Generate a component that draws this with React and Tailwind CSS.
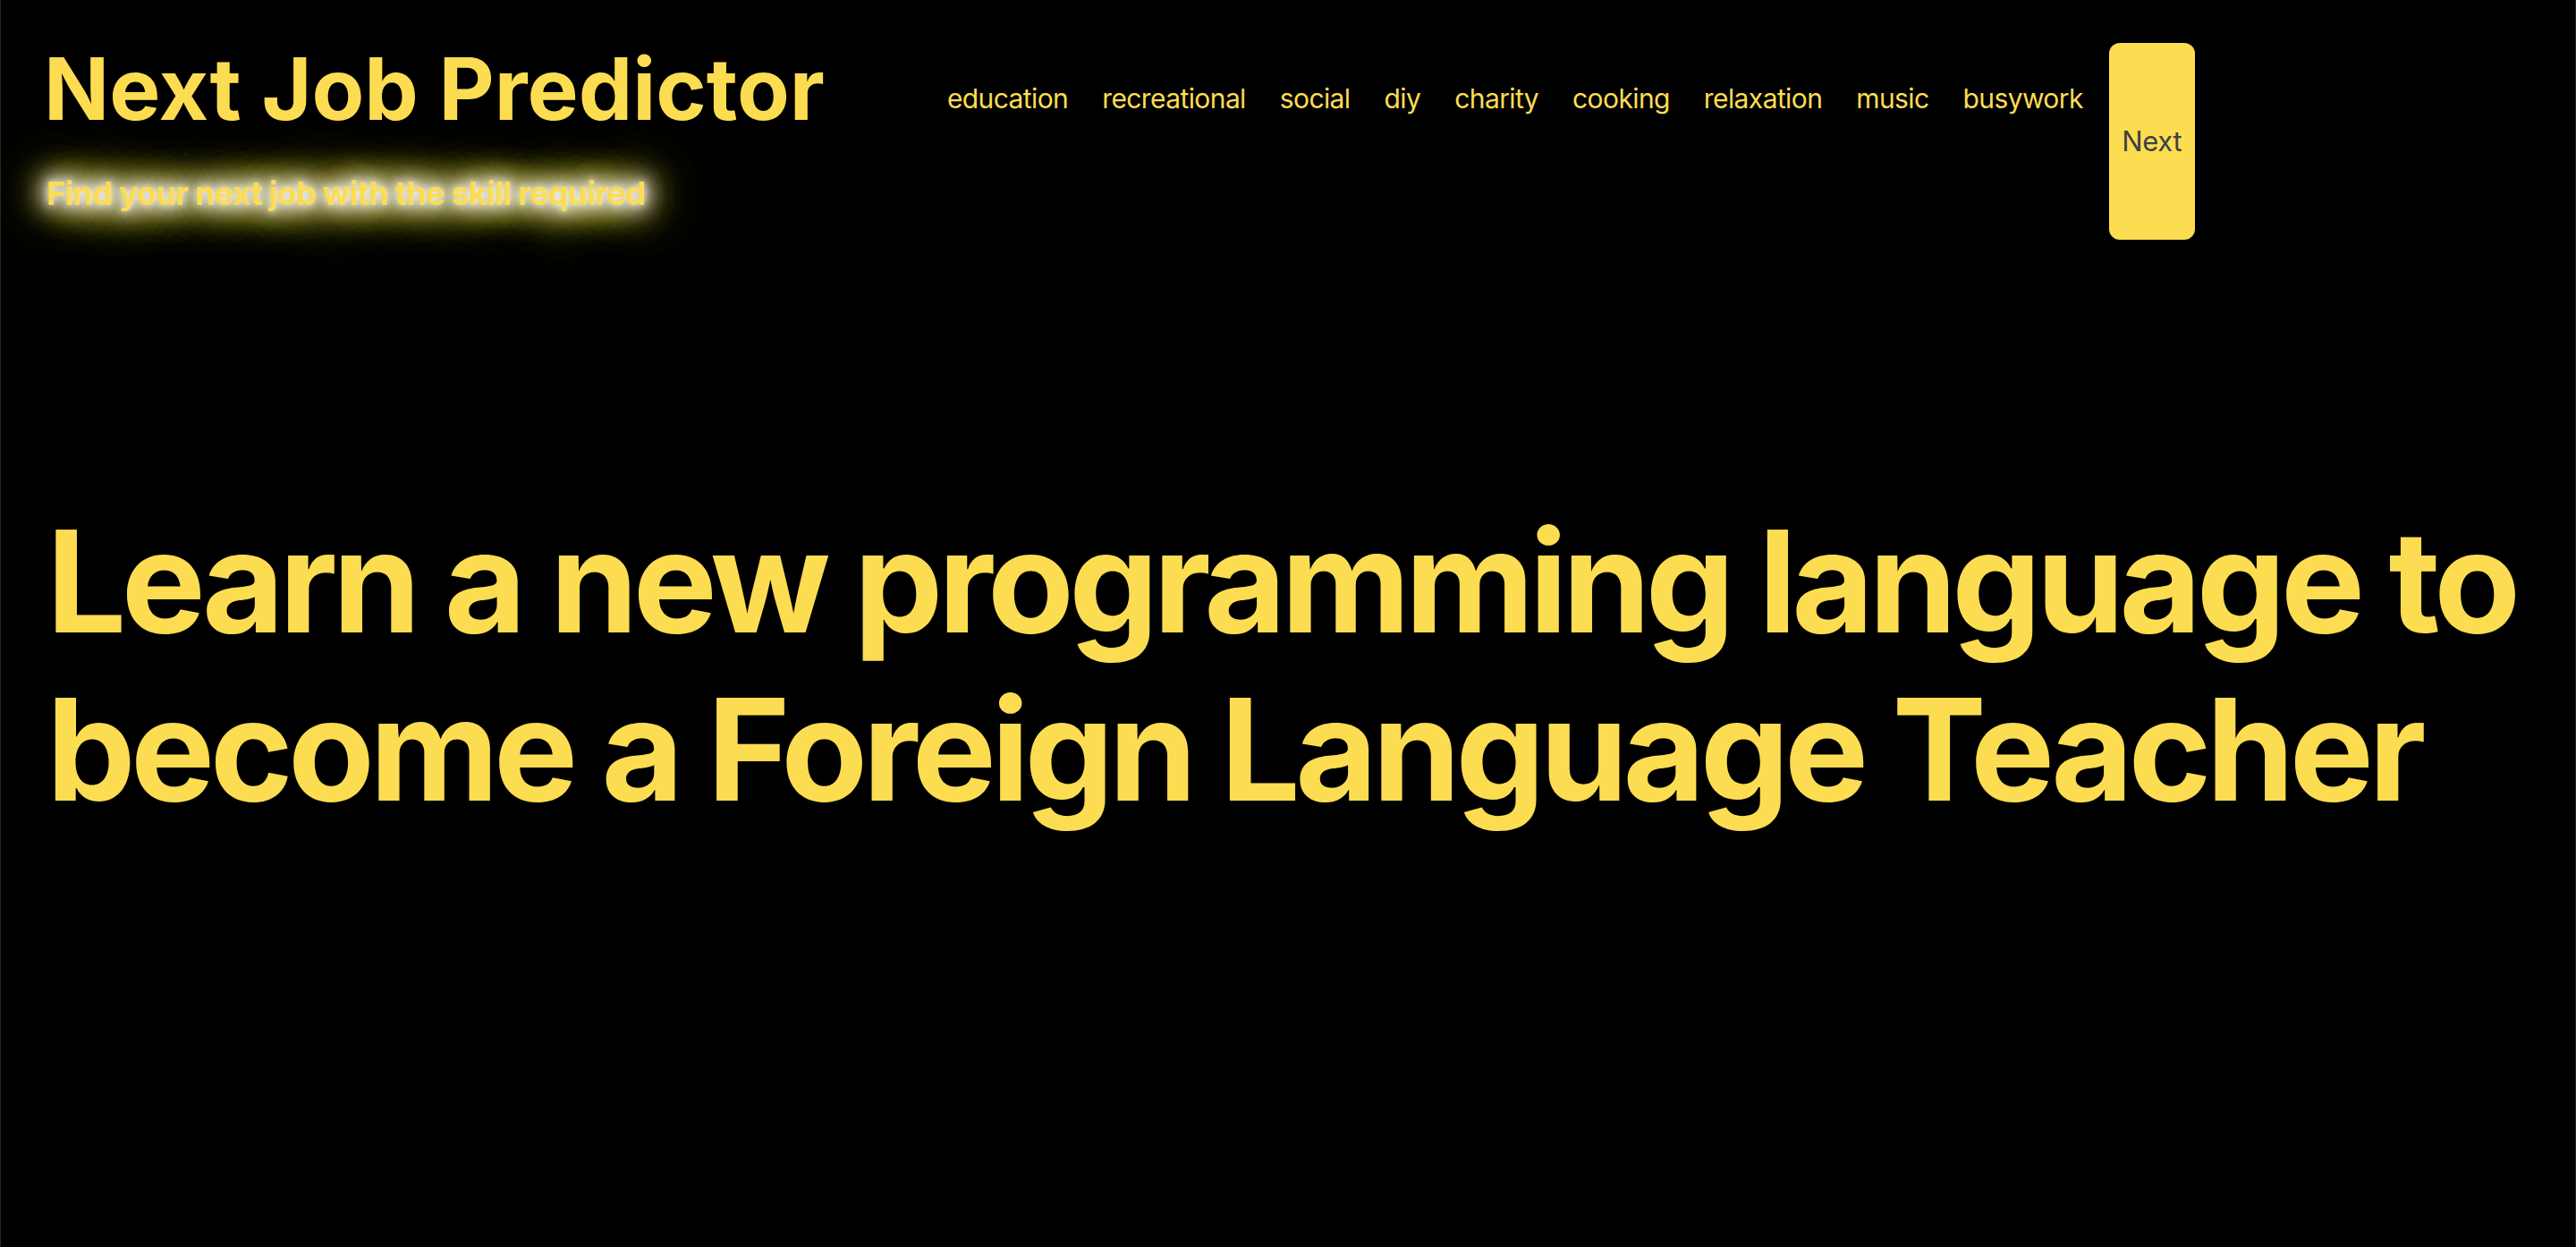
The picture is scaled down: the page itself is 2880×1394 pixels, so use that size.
const skills = [
  "education",
  "recreational",
  "social",
  "diy",
  "charity",
  "cooking",
  "relaxation",
  "music",
  "busywork",
];

export default function App() {
  return (
    <div className="min-h-screen bg-black border-x border-[#262626] pl-[51px] pr-[40px] font-['Inter',sans-serif] text-[#fcdd52]">
      <header className="flex items-start pt-[42px]">
        <div>
          <h1 className="-ml-[3px] text-[96px] font-bold leading-[115px]">Next Job Predictor</h1>
          <p className="mt-[37px] text-[36px] font-bold leading-[44px] tracking-[-0.02em] [text-shadow:0_0_10px_#fff,0_0_24px_#fff,0_0_24px_#fff,0_0_36px_#fff6cc,0_0_48px_#fcdd52,0_0_48px_#fcdd52,0_0_72px_#fcdd52,0_0_72px_#fcdd52]">
            Find your next job with the skill required
          </p>
        </div>

        <nav className="ml-[137px] flex items-start pt-[6px]">
          <ul className="mt-[42px] flex gap-[38px] text-[30px] leading-[40px] tracking-[-0.02em]">
            {skills.map((s) => (
              <li key={s}>
                <a href="#" className="hover:underline">{s}</a>
              </li>
            ))}
          </ul>
          <button className="ml-[29px] h-[220px] w-[96px] rounded-[12px] bg-[#fcdd52] text-[31px] tracking-[-0.01em] text-neutral-700">
            Next
          </button>
        </nav>
      </header>

      <main>
        <h2 className="mt-[288px] text-[158px] font-bold leading-[188px] tracking-[-0.035em]">
          Learn a new programming language to become a Foreign Language Teacher
        </h2>
      </main>
    </div>
  );
}
